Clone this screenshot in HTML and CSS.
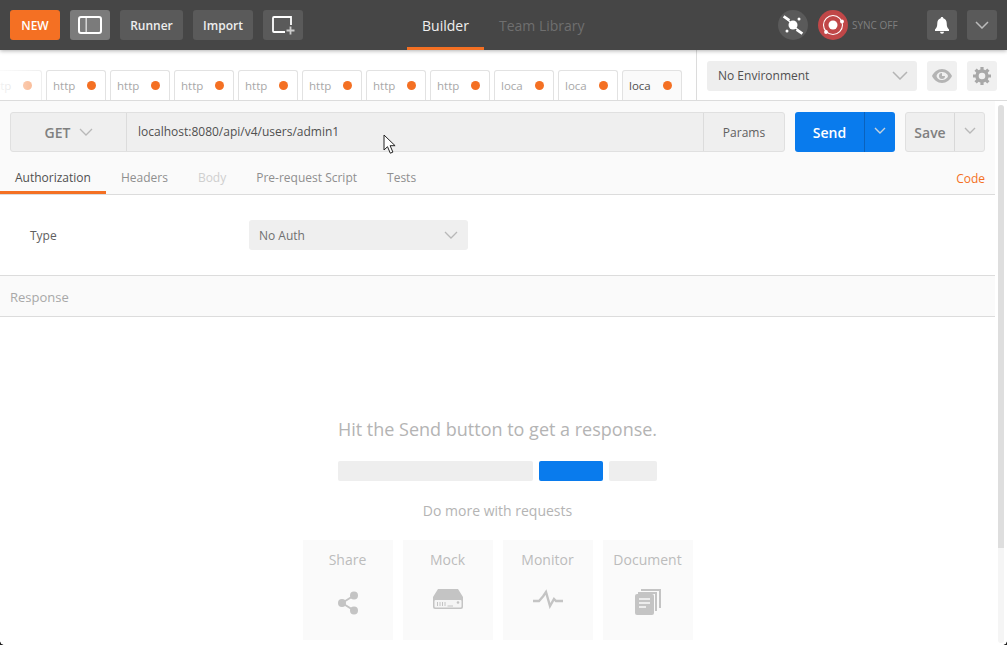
FILE: index.html
```html
<!DOCTYPE html>
<html lang="en">
<head>
<meta charset="utf-8">
<title>Postman</title>
<link rel="stylesheet" href="styles.css">
</head>
<body>
<div class="app">
  <header class="topbar">
    <div class="top-left">
      <button class="btn btn-new">NEW</button>
      <button class="btn btn-sidebar" aria-label="Toggle sidebar">
        <svg width="24" height="18" viewBox="0 0 24 18"><rect x="1" y="1" width="22" height="16" rx="2" fill="none" stroke="#fff" stroke-width="2"/><rect x="7.500" y="2" width="1.400" height="14" fill="#ddd"/></svg>
      </button>
      <button class="btn btn-dark btn-runner">Runner</button>
      <button class="btn btn-dark btn-import">Import</button>
      <button class="btn btn-dark btn-newtab" aria-label="New window">
        <svg width="24" height="20" viewBox="0 0 24 20"><path d="M20 10V2H3a1 1 0 0 0-1 1v13a1 1 0 0 0 1 1h11" fill="none" stroke="#fff" stroke-width="1.800"/><path d="M15.500 15.500h8M19.500 11.500v8" stroke="#ccc" stroke-width="1.800" fill="none"/></svg>
      </button>
    </div>
    <nav class="top-center">
      <a class="nav-link nav-active">Builder</a>
      <a class="nav-link">Team Library</a>
    </nav>
    <div class="top-right">
      <span class="round round-grey">
        <svg width="22" height="22" viewBox="0 0 22 22" fill="#fff"><circle cx="11" cy="11" r="4.500"/><path d="M11 11 5 5M11 11l6 6" stroke="#fff" stroke-width="1.200"/><rect x="1" y="2.900" width="7" height="2.800" transform="rotate(35 4.500 4.300)"/><rect x="14" y="16.300" width="7" height="2.800" transform="rotate(35 17.500 17.700)"/><circle cx="17" cy="5" r="1.500"/><circle cx="5" cy="17" r="1.500"/></svg>
      </span>
      <span class="round round-red">
        <svg width="24" height="24" viewBox="0 0 24 24"><circle cx="12" cy="12" r="9.500" fill="none" stroke="#fff" stroke-width="1.100"/><circle cx="12" cy="12" r="4.500" fill="#fff"/><circle cx="21" cy="8.500" r="1.900" fill="#fff"/><circle cx="5" cy="19" r="1.900" fill="#fff"/></svg>
      </span>
      <span class="sync-label">SYNC OFF</span>
      <button class="btn btn-dark btn-square btn-bell" aria-label="Notifications">
        <svg width="16" height="18" viewBox="0 0 16 18" fill="#fff"><path d="M8 1c-.8 0-1.300.6-1.300 1.200C4.500 3 3.300 4.800 3.300 7c0 3.500-.7 5-2.300 6.500V15h14v-1.500C13.400 12 12.700 10.500 12.700 7c0-2.200-1.200-4-3.400-4.800C9.300 1.600 8.800 1 8 1z"/><path d="M6 15.800h4a2 2 0 0 1-4 0z"/></svg>
      </button>
      <button class="btn btn-dark btn-square" aria-label="Menu">
        <svg width="14" height="8" viewBox="0 0 14 8"><path d="M1 1l6 6 6-6" fill="none" stroke="#bbb" stroke-width="1.500"/></svg>
      </button>
    </div>
  </header>

  <section class="tabbar">
    <div class="tabs">
      <div class="tab"><span class="tab-label">http</span><i class="dot"></i></div>
      <div class="tab"><span class="tab-label">http</span><i class="dot"></i></div>
      <div class="tab"><span class="tab-label">http</span><i class="dot"></i></div>
      <div class="tab"><span class="tab-label">http</span><i class="dot"></i></div>
      <div class="tab"><span class="tab-label">http</span><i class="dot"></i></div>
      <div class="tab"><span class="tab-label">http</span><i class="dot"></i></div>
      <div class="tab"><span class="tab-label">http</span><i class="dot"></i></div>
      <div class="tab"><span class="tab-label">http</span><i class="dot"></i></div>
      <div class="tab"><span class="tab-label">loca</span><i class="dot"></i></div>
      <div class="tab"><span class="tab-label">loca</span><i class="dot"></i></div>
      <div class="tab tab-active"><span class="tab-label">loca</span><i class="dot"></i></div>
      <div class="tabs-fade"></div>
    </div>
    <div class="env">
      <div class="env-select"><span>No Environment</span>
        <svg width="16" height="9" viewBox="0 0 16 9"><path d="M1 1l7 7 7-7" fill="none" stroke="#b4b4b4" stroke-width="1.500"/></svg>
      </div>
      <button class="env-btn" aria-label="Quick look">
        <svg width="20" height="14" viewBox="0 0 20 14"><path fill-rule="evenodd" fill="#b4b4b4" d="M10 0C5.500 0 2 3 0 7c2 4 5.500 7 10 7s8-3 10-7c-2-4-5.500-7-10-7zm-.5 3C6.500 3 5 5 4.500 7c.5 2 2 4 5 4s6-1.500 6.500-4C15.500 4.500 12.500 3 9.500 3z"/><path fill="#b4b4b4" d="M10 4a3 3 0 1 0 3 3h-3z"/></svg>
      </button>
      <button class="env-btn" aria-label="Manage environments">
        <svg width="18" height="18" viewBox="0 0 18 18"><circle cx="9" cy="9" r="5" fill="none" stroke="#a8a8a8" stroke-width="3.400"/><path d="M9 0v4M9 14v4M0 9h4M14 9h4M2.600 2.600l2.900 2.900M12.500 12.500l2.900 2.900M15.400 2.600l-2.900 2.900M5.500 12.500l-2.900 2.900" stroke="#a8a8a8" stroke-width="3.200"/></svg>
      </button>
    </div>
  </section>

  <div class="body-row">
    <main class="workspace">
      <section class="request">
        <div class="url-row">
          <div class="url-group">
            <div class="method"><span>GET</span>
              <svg width="14" height="8" viewBox="0 0 14 8"><path d="M1 1l6 6 6-6" fill="none" stroke="#b8b8b8" stroke-width="1.300"/></svg>
            </div>
            <div class="url">localhost:8080/api/v4/users/admin1</div>
            <div class="params">Params</div>
          </div>
          <div class="send">
            <span class="send-main">Send</span>
            <span class="send-caret"><svg width="12" height="7" viewBox="0 0 12 7"><path d="M1 1l5 5 5-5" fill="none" stroke="#c9d3dc" stroke-width="1.400"/></svg></span>
          </div>
          <div class="save">
            <span class="save-main">Save</span>
            <span class="save-caret"><svg width="12" height="7" viewBox="0 0 12 7"><path d="M1 1l5 5 5-5" fill="none" stroke="#b8b8b8" stroke-width="1.400"/></svg></span>
          </div>
        </div>
        <div class="req-tabs">
          <a class="req-tab req-tab-active">Authorization</a>
          <a class="req-tab">Headers</a>
          <a class="req-tab req-tab-off">Body</a>
          <a class="req-tab">Pre-request Script</a>
          <a class="req-tab">Tests</a>
          <a class="code-link">Code</a>
        </div>
      </section>

      <section class="auth">
        <span class="auth-label">Type</span>
        <div class="auth-select"><span>No Auth</span>
          <svg width="14" height="8" viewBox="0 0 14 8"><path d="M1 1l6 6 6-6" fill="none" stroke="#b8b8b8" stroke-width="1.300"/></svg>
        </div>
      </section>

      <div class="response-head">Response</div>

      <section class="empty">
        <h2 class="empty-title">Hit the Send button to get a response.</h2>
        <div class="empty-bars">
          <i class="bar bar-url"></i><i class="bar bar-send"></i><i class="bar bar-save"></i>
        </div>
        <p class="empty-sub">Do more with requests</p>
        <div class="cards">
          <div class="card"><span>Share</span>
            <svg width="22" height="26" viewBox="0 -2 22 26" fill="#c4c4c4"><circle cx="17" cy="4.500" r="4"/><circle cx="17" cy="19.500" r="4"/><circle cx="5" cy="12" r="4"/><path d="M5 12 17 4.500M5 12l12 7.500" stroke="#c4c4c4" stroke-width="2"/></svg>
          </div>
          <div class="card"><span>Mock</span>
            <svg width="30" height="20" viewBox="0 0 30 20"><path fill="#c4c4c4" d="M5 0h20l5 8v10a2 2 0 0 1-2 2H2a2 2 0 0 1-2-2V8z"/><rect x="1.500" y="11" width="27" height="7.500" rx="1" fill="#f5f5f5"/><path d="M4.500 13v4M7 13v4M9.500 13v4M12 13v4M14.500 17H20" stroke="#c4c4c4" stroke-width="1"/><circle cx="25" cy="13.500" r="1.300" fill="#c4c4c4"/></svg>
          </div>
          <div class="card"><span>Monitor</span>
            <svg width="30" height="20" viewBox="0 0 30 20"><path d="M0 12h6l3.500-4 .5-.5L13 3l4 14 4-7 2 2h7" fill="none" stroke="#c4c4c4" stroke-width="2.400"/></svg>
          </div>
          <div class="card"><span>Document</span>
            <svg width="26" height="26" viewBox="0 0 26 26"><path d="M6 0h20v19h-2V2H6z" fill="#c4c4c4"/><path d="M3 3h19v19h-2V5H3z" fill="#c4c4c4"/><rect y="5" width="19" height="21" rx="2" fill="#c4c4c4"/><path d="M4 10h11M4 14h11M4 18h7" stroke="#f9f9f9" stroke-width="1.600"/></svg>
          </div>
        </div>
      </section>
    </main>
    <div class="scrollbar"><div class="scroll-thumb"></div></div>
  </div>

  <svg class="cursor" width="15" height="21" viewBox="0 0 15 21"><path d="M1 1v15l3.500-3.300 2.800 6.500 2.600-1.100-2.800-6.400h5z" fill="#fff" stroke="#222" stroke-width="1"/></svg>
  <i class="corner corner-left"></i>
  <i class="corner corner-right"></i>
</div>
</body>
</html>
```

FILE: styles.css
```css
* { box-sizing: border-box; }
html, body { margin: 0; height: 100%; overflow: hidden; background: #fff; }
body { font-family: "Open Sans", "Liberation Sans", sans-serif; color: #505050; }
button { font-family: inherit; border: 0; padding: 0; margin: 0; }
svg { display: block; flex: none; }
h2, p { margin: 0; font-weight: 400; }
.app { position: relative; width: 1007px; height: 645px; display: flex; flex-direction: column; overflow: hidden; }

/* top bar */
.topbar { height: 50px; flex: none; background: #464646; display: flex; align-items: center; padding: 0 10px; position: relative; z-index: 2; box-shadow: 0 1px 4px rgba(0,0,0,.3); }
.top-left { display: flex; gap: 10px; }
.btn { height: 30px; border-radius: 3px; display: flex; align-items: center; justify-content: center; color: #fff; font-size: 12px; font-weight: 600; }
.btn-new { width: 50px; background: #f47023; }
.btn-sidebar { width: 40px; background: #7b7b7b; }
.btn-dark { background: #5a5a5a; color: #eee; }
.btn-runner { width: 63px; }
.btn-import { width: 60px; }
.btn-newtab { width: 40px; }
.btn-square { width: 30px; }
.top-center { position: absolute; left: 407px; top: 0; height: 50px; display: flex; }
.nav-link { height: 50px; padding: 16px 15px 0; font-size: 14px; line-height: 20px; color: #6f6f6f; }
.nav-active { color: #f0f0f0; width: 77px; border-bottom: 3px solid #f47023; }
.top-right { margin-left: auto; display: flex; align-items: center; }
.round { width: 30px; height: 30px; border-radius: 50%; display: flex; align-items: center; justify-content: center; }
.round-grey { background: #5a5a5a; margin-right: 10px; }
.round-red { background: #c04748; }
.sync-label { width: 79px; padding-left: 4px; font-size: 10px; color: #7f7f7f; }
.btn-bell { margin-right: 10px; }

/* tab strip */
.tabbar { height: 51px; flex: none; display: flex; border-bottom: 1px solid #dcdcdc; background: #fff; }
.tabs { position: relative; width: 697px; flex: none; height: 50px; padding: 20px 14px 0 0; display: flex; justify-content: flex-end; gap: 4px; overflow: hidden; border-right: 1px solid #dcdcdc; }
.tab { width: 60px; height: 30px; flex: none; display: flex; align-items: center; justify-content: space-between; padding: 0 9px 1px 6px; border: 1px solid #e2e2e2; border-bottom: 0; border-radius: 3px 3px 0 0; background: #fff; font-size: 11.500px; color: #a8a8a8; }
.tab-active { background: #fafafa; color: #505050; }
.dot { width: 9px; height: 9px; border-radius: 50%; background: #f47023; }
.tabs-fade { position: absolute; left: 0; top: 20px; width: 42px; height: 30px; background: linear-gradient(90deg, rgba(255,255,255,.85), rgba(255,255,255,.45)); }
.env { flex: 1; display: flex; align-items: flex-start; padding: 11px 10px 0; gap: 10px; }
.env-select { width: 210px; height: 30px; background: #eee; border-radius: 3px; display: flex; align-items: center; justify-content: space-between; padding: 0 9px 2px 11px; font-size: 12px; color: #505050; }
.env-btn { width: 30px; height: 30px; border-radius: 3px; background: #f0f0f0; display: flex; align-items: center; justify-content: center; }

/* body */
.body-row { flex: 1; display: flex; min-height: 0; }
.workspace { width: 995px; flex: none; display: flex; flex-direction: column; }
.scrollbar { width: 6px; margin: 4px 0 2px 3px; background: #f5f5f5; border-radius: 3px; }
.scroll-thumb { height: 443px; background: #dedede; border-radius: 3px 3px 0 0; }

.request { height: 94px; flex: none; background: #fafafa; border-bottom: 1px solid #dcdcdc; padding-top: 11px; }
.url-row { height: 40px; display: flex; padding: 0 10px; gap: 10px; }
.url-group { width: 775px; height: 40px; display: flex; background: #efefef; border: 1px solid #e0e0e0; border-radius: 3px; }
.method { width: 116px; flex: none; display: flex; align-items: center; justify-content: center; gap: 9px; border-right: 1px solid #dcdcdc; padding-left: 1px; font-size: 14px; font-weight: 600; color: #808080; }
.url { flex: 1; padding-left: 11px; line-height: 38px; font-size: 12px; color: #505050; }
.params { width: 81px; flex: none; border-left: 1px solid #dcdcdc; text-align: center; line-height: 40px; font-size: 12px; color: #606060; }
.send { width: 100px; height: 40px; display: flex; background: #097bed; border-radius: 3px; color: #fff; }
.send-main { width: 70px; text-align: center; line-height: 42px; font-size: 14px; font-weight: 600; border-right: 1px solid #0a62bd; }
.send-caret { flex: 1; display: flex; align-items: center; justify-content: center; padding-bottom: 4px; }
.save { width: 80px; height: 40px; display: flex; background: #efefef; border: 1px solid #e0e0e0; border-radius: 3px; }
.save-main { width: 49px; text-align: center; line-height: 40px; font-size: 14px; font-weight: 600; color: #808080; border-right: 1px solid #d8d8d8; }
.save-caret { flex: 1; display: flex; align-items: center; justify-content: center; padding-bottom: 4px; }
.req-tabs { height: 42px; display: flex; }
.req-tab { height: 42px; padding: 17px 15px 0; line-height: 18px; font-size: 12px; color: #8f8f8f; }
.req-tab-active { color: #505050; border-bottom: 3px solid #f47023; }
.req-tab-off { color: #cfcfcf; }
.code-link { margin-left: auto; padding: 18px 10px 0 0; line-height: 18px; font-size: 12px; color: #f47023; }

.auth { height: 81px; flex: none; display: flex; padding: 25px 0 0 30px; border-bottom: 1px solid #dcdcdc; }
.auth-label { width: 219px; flex: none; line-height: 32px; font-size: 12px; color: #606060; }
.auth-select { width: 219px; height: 30px; display: flex; align-items: center; justify-content: space-between; padding: 0 10px; background: #efefef; border-radius: 3px; font-size: 12px; color: #707070; }

.response-head { height: 41px; flex: none; padding-left: 10px; line-height: 42px; font-size: 13px; color: #a8a8a8; background: #fafafa; border-bottom: 1px solid #dcdcdc; }

.empty { flex: 1; display: flex; flex-direction: column; align-items: center; padding-top: 99px; min-height: 0; }
.empty-title { font-size: 18px; line-height: 26px; color: #b4b4b4; }
.empty-bars { display: flex; gap: 6px; margin-top: 19px; }
.bar { height: 20px; border-radius: 2px; background: #eee; }
.bar-url { width: 195px; }
.bar-send { width: 64px; background: #097bed; }
.bar-save { width: 48px; }
.empty-sub { margin-top: 20px; font-size: 14px; line-height: 20px; color: #b4b4b4; }
.cards { display: flex; gap: 10px; margin-top: 19px; }
.card { width: 90px; height: 100px; background: #fafafa; display: flex; flex-direction: column; align-items: center; padding-top: 10px; font-size: 14px; line-height: 20px; color: #bcbcbc; }
.card svg { margin-top: 19px; }

/* overlays */
.cursor { position: absolute; left: 383px; top: 134px; z-index: 3; }
.corner { position: absolute; bottom: 0; width: 4px; height: 4px; z-index: 3; }
.corner-left { left: 0; background: radial-gradient(circle at 100% 0, transparent 3.500px, #222 4px); }
.corner-right { right: 0; background: radial-gradient(circle at 0 0, transparent 3.500px, #222 4px); }
```
